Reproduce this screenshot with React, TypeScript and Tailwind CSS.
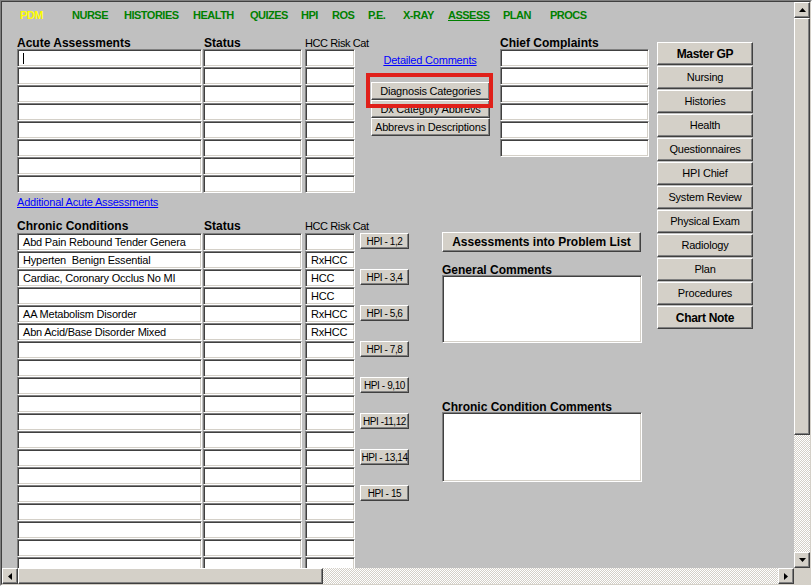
const raised =
  "bg-[#d4d0c8] border border-t-white border-l-white border-r-[#404040] border-b-[#404040] shadow-[inset_-1px_-1px_0_#808080]";
const sunken =
  "bg-white border border-t-[#808080] border-l-[#808080] border-r-white border-b-white shadow-[inset_1px_1px_0_#404040,inset_-1px_-1px_0_#d4d0c8]";
const dither =
  "bg-[repeating-conic-gradient(#d4d0c8_0_25%,#ffffff_0_50%)] bg-[length:2px_2px]";

const navItems: [string, string][] = [
  ["PDM", "w-[52px]"],
  ["NURSE", "w-[52px]"],
  ["HISTORIES", "w-[69px]"],
  ["HEALTH", "w-[57px]"],
  ["QUIZES", "w-[51px]"],
  ["HPI", "w-[31px]"],
  ["ROS", "w-[36px]"],
  ["P.E.", "w-[35px]"],
  ["X-RAY", "w-[45px]"],
  ["ASSESS", "w-[55px]"],
  ["PLAN", "w-[47px]"],
  ["PROCS", ""],
];

const sideButtons = [
  "Master GP",
  "Nursing",
  "Histories",
  "Health",
  "Questionnaires",
  "HPI Chief",
  "System Review",
  "Physical Exam",
  "Radiology",
  "Plan",
  "Procedures",
  "Chart Note",
];

const chronic: [string, string][] = [
  ["Abd Pain Rebound Tender Genera", ""],
  ["Hyperten  Benign Essential", "RxHCC"],
  ["Cardiac, Coronary Occlus No MI", "HCC"],
  ["", "HCC"],
  ["AA Metabolism Disorder", "RxHCC"],
  ["Abn Acid/Base Disorder Mixed", "RxHCC"],
  ...Array.from({ length: 14 }, () => ["", ""] as [string, string]),
];

const hpi = ["HPI - 1,2", "HPI - 3,4", "HPI - 5,6", "HPI - 7,8", "HPI - 9,10", "HPI -11,12", "HPI - 13,14", "HPI - 15"];

function Cell({ w, text = "", cursor = false }: { w: string; text?: string; cursor?: boolean }) {
  return (
    <div
      className={`${sunken} ${w} h-[18px] pl-[5px] flex items-center text-[11px] leading-[16px] tracking-[-0.2px] whitespace-pre overflow-hidden`}
    >
      {cursor && <span className="inline-block w-px h-[11px] bg-black" />}
      {text}
    </div>
  );
}

function Row({ a = "", c = "", cursor = false }: { a?: string; c?: string; cursor?: boolean }) {
  return (
    <div className="flex">
      <Cell w="w-[185px]" text={a} cursor={cursor} />
      <div className="ml-px">
        <Cell w="w-[99px]" />
      </div>
      <div className="ml-[3px]">
        <Cell w="w-[50px]" text={c} />
      </div>
    </div>
  );
}

function Header({ title, h }: { title: string; h: string }) {
  return (
    <div className={`flex ${h} items-end leading-[15px] whitespace-nowrap`}>
      <div className="w-[186px] shrink-0 text-[12px] font-bold">{title}</div>
      <div className="w-[102px] shrink-0 pl-px text-[12px] font-bold">Status</div>
      <div className="shrink-0 text-[11px] tracking-[-0.4px]">HCC Risk Cat</div>
    </div>
  );
}

function Arrow({ dir }: { dir: "up" | "down" | "left" | "right" }) {
  const pts = {
    up: "3.5,0 7,4 0,4",
    down: "0,0 7,0 3.5,4",
    left: "4,0 4,7 0,3.5",
    right: "0,0 4,3.5 0,7",
  }[dir];
  const vertical = dir === "up" || dir === "down";
  return (
    <svg width={vertical ? 7 : 4} height={vertical ? 4 : 7}>
      <polygon points={pts} fill="#000" />
    </svg>
  );
}

export default function App() {
  return (
    <div className="w-[812px] h-[586px] border border-t-[#808080] border-l-[#808080] border-r-white border-b-white font-['Liberation_Sans',Arial,sans-serif] text-black">
      <div className="w-full h-full flex flex-col border border-t-[#404040] border-l-[#404040] border-r-[#d4d0c8] border-b-[#d4d0c8]">
        <div className="flex flex-1 min-h-0">
          {/* content */}
          <div className="flex-1 overflow-hidden bg-[#c0c0c0]">
            <div className="h-[26px] flex items-center pl-[18px] text-[11px] font-bold tracking-[-0.5px]">
              {navItems.map(([t, w]) => (
                <div
                  key={t}
                  className={`${w} ${t === "PDM" ? "text-[#ffff00]" : "text-[#008000]"} ${t === "ASSESS" ? "underline" : ""}`}
                >
                  {t}
                </div>
              ))}
            </div>

            <div className="flex pl-[15px]">
              <div className="flex flex-col w-[632px] shrink-0">
                {/* upper */}
                <div className="flex">
                  <div className="flex flex-col w-[338px] shrink-0">
                    <Header title="Acute Assessments" h="h-[23px] -mb-[2px]" />
                    {Array.from({ length: 8 }, (_, i) => (
                      <Row key={i} cursor={i === 0} />
                    ))}
                    <div className="mt-[2px] h-[14px] leading-[14px] text-[11px] tracking-[-0.2px] text-[#0000ff] underline">
                      Additional Acute Assessments
                    </div>
                  </div>

                  <div className="relative ml-[5px] w-[140px] shrink-0 pt-[25px]">
                    <div className="h-[14px] leading-[14px] text-center text-[11px] tracking-[-0.2px] text-[#0000ff] underline">
                      Detailed Comments
                    </div>
                    <div className="mt-[15px] ml-[11px] w-[119px] flex flex-col text-[11px] tracking-[-0.2px]">
                      {["Diagnosis Categories", "Dx Category Abbrevs", "Abbrevs in Descriptions"].map((t) => (
                        <div key={t} className={`${raised} h-[18px] flex items-center justify-center whitespace-nowrap`}>
                          {t}
                        </div>
                      ))}
                    </div>
                    <div className="absolute left-[6px] top-[45px] w-[127px] h-[35px] border-4 border-[#e0201a]" />
                  </div>

                  <div className="flex flex-col w-[149px] shrink-0">
                    <div className="flex h-[23px] -mb-[2px] items-end leading-[15px] text-[12px] font-bold whitespace-nowrap">
                      Chief Complaints
                    </div>
                    {Array.from({ length: 6 }, (_, i) => (
                      <Cell key={i} w="w-[149px]" />
                    ))}
                  </div>
                </div>

                {/* lower */}
                <div className="flex">
                  <div className="flex flex-col w-[338px] shrink-0">
                    <Header title="Chronic Conditions" h="h-[25px] -mb-[1px]" />
                    {chronic.map(([a, c], i) => (
                      <Row key={i} a={a} c={c} />
                    ))}
                  </div>

                  <div className="ml-[5px] w-[49px] shrink-0 pt-[24px] flex flex-col gap-[20px]">
                    {hpi.map((t) => (
                      <div
                        key={t}
                        className={`${raised} h-[16px] flex items-center justify-center text-[10px] tracking-[-0.4px] whitespace-nowrap`}
                      >
                        {t}
                      </div>
                    ))}
                  </div>

                  <div className="ml-[33px] w-[200px] shrink-0 pt-[23px] flex flex-col">
                    <div className={`${raised} h-[20px] w-[199px] flex items-center justify-center text-[12px] font-bold`}>
                      Assessments into Problem List
                    </div>
                    <div className="mt-[11px] h-[12px] leading-[14px] text-[12px] font-bold whitespace-nowrap">General Comments</div>
                    <div className={`${sunken} h-[68px]`} />
                    <div className="mt-[57px] h-[12px] leading-[14px] text-[12px] font-bold whitespace-nowrap">
                      Chronic Condition Comments
                    </div>
                    <div className={`${sunken} h-[70px]`} />
                  </div>
                </div>
              </div>

              <div className="ml-[8px] mt-[14px] w-[96px] shrink-0 flex flex-col gap-px self-start">
                {sideButtons.map((t) => (
                  <div
                    key={t}
                    className={`${raised} h-[23px] flex items-center justify-center ${
                      t === "Master GP" || t === "Chart Note" ? "text-[12px] font-bold tracking-[-0.3px]" : "text-[11px] tracking-[-0.2px]"
                    }`}
                  >
                    {t}
                  </div>
                ))}
              </div>
            </div>
          </div>

          {/* vertical scrollbar */}
          <div className={`w-4 flex flex-col ${dither}`}>
            <div className={`${raised} h-4 flex items-center justify-center`}>
              <Arrow dir="up" />
            </div>
            <div className={`${raised} h-[417px]`} />
            <div className="flex-1" />
            <div className={`${raised} h-4 flex items-center justify-center`}>
              <Arrow dir="down" />
            </div>
          </div>
        </div>

        {/* horizontal scrollbar */}
        <div className="flex h-4">
          <div className={`flex flex-1 ${dither}`}>
            <div className={`${raised} w-4 flex items-center justify-center`}>
              <Arrow dir="left" />
            </div>
            <div className={`${raised} w-[305px]`} />
            <div className="flex-1" />
            <div className={`${raised} w-4 flex items-center justify-center`}>
              <Arrow dir="right" />
            </div>
          </div>
          <div className="w-4 bg-[#d4d0c8]" />
        </div>
      </div>
    </div>
  );
}
